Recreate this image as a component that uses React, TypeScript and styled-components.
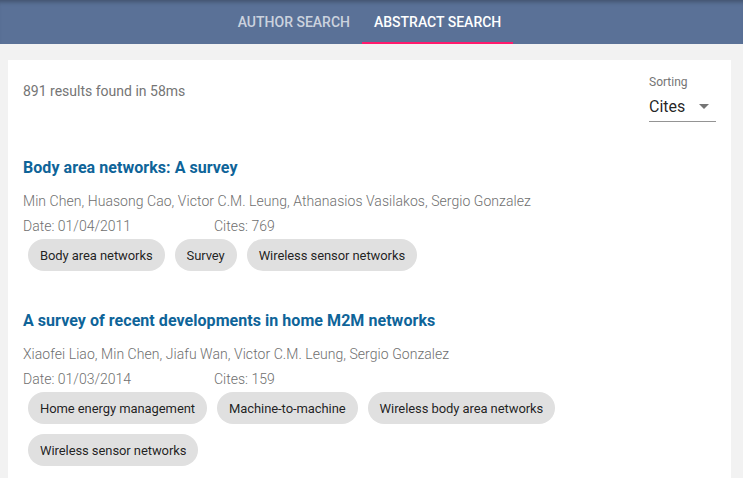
import React from 'react'
import styled, { createGlobalStyle } from 'styled-components'

interface IArticle {
  title: string
  authors: string[]
  date: string
  cites: number
  keywords: string[]
}

const articles: IArticle[] = [
  {
    title: 'Body area networks: A survey',
    authors: [
      'Min Chen',
      'Huasong Cao',
      'Victor C.M. Leung',
      'Athanasios Vasilakos',
      'Sergio Gonzalez',
    ],
    date: '01/04/2011',
    cites: 769,
    keywords: ['Body area networks', 'Survey', 'Wireless sensor networks'],
  },
  {
    title: 'A survey of recent developments in home M2M networks',
    authors: [
      'Xiaofei Liao',
      'Min Chen',
      'Jiafu Wan',
      'Victor C.M. Leung',
      'Sergio Gonzalez',
    ],
    date: '01/03/2014',
    cites: 159,
    keywords: [
      'Home energy management',
      'Machine-to-machine',
      'Wireless body area networks',
      'Wireless sensor networks',
    ],
  },
]

const GlobalStyle = createGlobalStyle`
  body {
    margin: 0;
    background: #f2f2f2;
    font-family: Roboto, 'Liberation Sans', sans-serif;
  }
`

const Header = styled.header`
  height: 44px;
  background: #5a7197;
  box-shadow: inset 0 5px 4px -3px rgba(0, 0, 0, 0.28);
  display: flex;
  justify-content: center;
  padding-right: 4px;
`

const Tab = styled.button<{ $active?: boolean }>`
  position: relative;
  border: none;
  background: transparent;
  padding: 0 12px;
  font-family: inherit;
  font-size: 14px;
  font-weight: 500;
  text-transform: uppercase;
  color: ${({ $active }) => ($active ? '#ffffff' : 'rgba(255, 255, 255, 0.7)')};
  cursor: pointer;
  &::after {
    content: '';
    position: absolute;
    left: 0;
    right: 0;
    bottom: 0;
    height: 2px;
    background: ${({ $active }) => ($active ? '#ff1a6c' : 'transparent')};
  }
`

const Main = styled.main`
  padding: 16px 12px 0 8px;
`

const Card = styled.section`
  background: #fff;
  padding: 12px 15px 12px 15px;
  min-height: 420px;
`

const TopRow = styled.div`
  display: flex;
  justify-content: space-between;
  align-items: flex-start;
  padding-bottom: 1px;
`

const ResultCount = styled.div`
  margin-top: 9px;
  font-size: 14px;
  line-height: 20px;
  color: #757575;
`

const SortBox = styled.div`
  width: 67px;
  margin-top: 4px;
  display: flex;
  flex-direction: column;
`

const SortLabel = styled.label`
  font-size: 12px;
  line-height: 12px;
  color: #757575;
`

const SortSelect = styled.div`
  height: 29px;
  padding-top: 4px;
  border-bottom: 1px solid #949494;
  display: flex;
  align-items: center;
  justify-content: space-between;
  font-size: 16px;
  color: rgba(0, 0, 0, 0.87);
  svg {
    margin-right: 7px;
  }
`

const Article = styled.article`
  padding-top: 33px;
`

const Title = styled.h2`
  margin: 0;
  font-size: 16px;
  line-height: 24px;
  font-weight: 700;
  letter-spacing: 0.05px;
  color: #0e6499;
`

const Authors = styled.div`
  margin-top: 11px;
  font-size: 14px;
  line-height: 20px;
  font-weight: 300;
  letter-spacing: 0.05px;
  color: #6f6f6f;
`

const Meta = styled.div`
  margin-top: 5px;
  display: flex;
  font-size: 14px;
  line-height: 20px;
  font-weight: 300;
  color: #6f6f6f;
  span:first-child {
    width: 191px;
  }
`

const Chips = styled.div`
  margin-top: -2px;
  display: flex;
  flex-wrap: wrap;
`

const Chip = styled.span`
  height: 32px;
  margin: 5px;
  padding: 0 12px;
  border-radius: 16px;
  background: #e0e0e0;
  display: inline-flex;
  align-items: center;
  font-size: 13px;
  letter-spacing: -0.08px;
  color: rgba(0, 0, 0, 0.87);
`

const App = () => {
  return (
    <>
      <GlobalStyle />
      <Header>
        <Tab>Author Search</Tab>
        <Tab $active>Abstract Search</Tab>
      </Header>
      <Main>
        <Card>
          <TopRow>
            <ResultCount>891 results found in 58ms</ResultCount>
            <SortBox>
              <SortLabel>Sorting</SortLabel>
              <SortSelect>
                Cites
                <svg width="10" height="5" viewBox="0 0 10 5">
                  <path d="M0 0 L10 0 L5 5 Z" fill="#757575" />
                </svg>
              </SortSelect>
            </SortBox>
          </TopRow>
          {articles.map((a) => (
            <Article key={a.title}>
              <Title>{a.title}</Title>
              <Authors>{a.authors.join(', ')}</Authors>
              <Meta>
                <span>Date: {a.date}</span>
                <span>Cites: {a.cites}</span>
              </Meta>
              <Chips>
                {a.keywords.map((k) => (
                  <Chip key={k}>{k}</Chip>
                ))}
              </Chips>
            </Article>
          ))}
        </Card>
      </Main>
    </>
  )
}

export default App
